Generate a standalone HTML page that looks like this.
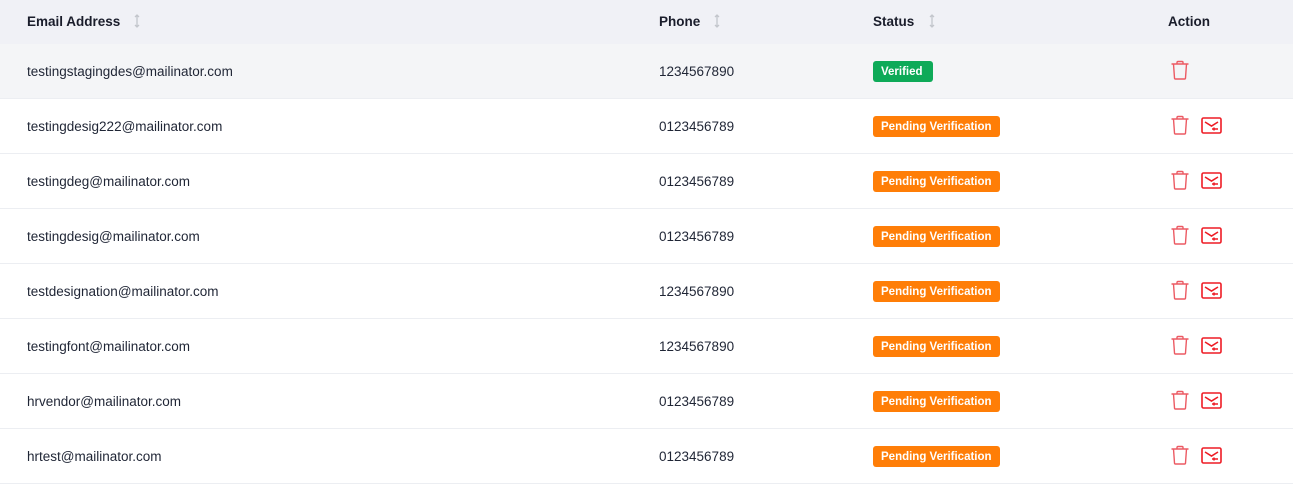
<!DOCTYPE html>
<html><head><meta charset="utf-8"><style>
*{margin:0;padding:0;box-sizing:border-box}
body{width:1293px;height:490px;background:#fff;font-family:"Liberation Sans",sans-serif;color:#1b2033;position:relative;overflow:hidden}
.hdr{position:absolute;left:0;top:0;width:1293px;height:44px;background:#f0f1f6}
.h{position:absolute;top:14px;font-size:13.5px;font-weight:bold;color:#1a1d2b}
.sort{position:absolute;top:13px;width:8px;height:16px}
.row{position:absolute;left:0;width:1293px;height:55px;border-bottom:1px solid #eceef2}
.row.first{background:#f4f5f7}
.c{position:absolute;top:20px;font-size:13.5px;color:#1f2535}
.badge{position:absolute;top:17px;left:873px;height:21px;border-radius:3px;color:#fff;font-weight:bold;font-size:11.5px;line-height:22px;padding:0 8px}
.v{background:#0eaa58;width:60px}
.p{background:#ff7e07;width:127px}
.trash{position:absolute;left:1170px;top:16px}
.mail{position:absolute;left:1201px;top:18px}
</style></head><body>
<div class="hdr">
<div class="h" style="left:27px">Email Address</div>
<svg class="sort" style="left:133px" viewBox="0 0 8 16"><path d="M4 2v12M2 4l2-2 2 2M2 12l2 2 2-2" stroke="#c3c6cc" stroke-width="1.3" fill="none"/></svg>
<div class="h" style="left:659px">Phone</div>
<svg class="sort" style="left:713px" viewBox="0 0 8 16"><path d="M4 2v12M2 4l2-2 2 2M2 12l2 2 2-2" stroke="#c3c6cc" stroke-width="1.3" fill="none"/></svg>
<div class="h" style="left:873px">Status</div>
<svg class="sort" style="left:928px" viewBox="0 0 8 16"><path d="M4 2v12M2 4l2-2 2 2M2 12l2 2 2-2" stroke="#c3c6cc" stroke-width="1.3" fill="none"/></svg>
<div class="h" style="left:1168px">Action</div>
</div>

<div class="row first" style="top:44px"><div class="c" style="left:27px">testingstagingdes@mailinator.com</div><div class="c" style="left:659px">1234567890</div><div class="badge v">Verified</div>
<svg class="trash" width="20" height="20" viewBox="0 0 20 20"><path d="M1.5 4h17M7 4V2.5a1 1 0 0 1 1-1h4a1 1 0 0 1 1 1V4M3.5 4l1 14a1 1 0 0 0 1 1h9a1 1 0 0 0 1-1l1-14" stroke="#ec5a63" stroke-width="1.4" fill="none"/></svg></div>

<div class="row" style="top:99px"><div class="c" style="left:27px">testingdesig222@mailinator.com</div><div class="c" style="left:659px">0123456789</div><div class="badge p">Pending Verification</div>
<svg class="trash" width="20" height="20" viewBox="0 0 20 20"><path d="M1.5 4h17M7 4V2.5a1 1 0 0 1 1-1h4a1 1 0 0 1 1 1V4M3.5 4l1 14a1 1 0 0 0 1 1h9a1 1 0 0 0 1-1l1-14" stroke="#ec5a63" stroke-width="1.4" fill="none"/></svg>
<svg class="mail" width="21" height="17" viewBox="0 0 21 17"><rect x="1" y="1" width="19" height="15" rx="1.5" stroke="#ee1c25" stroke-width="1.6" fill="none"/><path d="M4 5l6.5 4L17 5M11 12h6M13 10.5v3" stroke="#ee1c25" stroke-width="1.6" fill="none"/></svg></div>

<div class="row" style="top:154px"><div class="c" style="left:27px">testingdeg@mailinator.com</div><div class="c" style="left:659px">0123456789</div><div class="badge p">Pending Verification</div>
<svg class="trash" width="20" height="20" viewBox="0 0 20 20"><path d="M1.5 4h17M7 4V2.5a1 1 0 0 1 1-1h4a1 1 0 0 1 1 1V4M3.5 4l1 14a1 1 0 0 0 1 1h9a1 1 0 0 0 1-1l1-14" stroke="#ec5a63" stroke-width="1.4" fill="none"/></svg>
<svg class="mail" width="21" height="17" viewBox="0 0 21 17"><rect x="1" y="1" width="19" height="15" rx="1.5" stroke="#ee1c25" stroke-width="1.6" fill="none"/><path d="M4 5l6.5 4L17 5M11 12h6M13 10.5v3" stroke="#ee1c25" stroke-width="1.6" fill="none"/></svg></div>

<div class="row" style="top:209px"><div class="c" style="left:27px">testingdesig@mailinator.com</div><div class="c" style="left:659px">0123456789</div><div class="badge p">Pending Verification</div>
<svg class="trash" width="20" height="20" viewBox="0 0 20 20"><path d="M1.5 4h17M7 4V2.5a1 1 0 0 1 1-1h4a1 1 0 0 1 1 1V4M3.5 4l1 14a1 1 0 0 0 1 1h9a1 1 0 0 0 1-1l1-14" stroke="#ec5a63" stroke-width="1.4" fill="none"/></svg>
<svg class="mail" width="21" height="17" viewBox="0 0 21 17"><rect x="1" y="1" width="19" height="15" rx="1.5" stroke="#ee1c25" stroke-width="1.6" fill="none"/><path d="M4 5l6.5 4L17 5M11 12h6M13 10.5v3" stroke="#ee1c25" stroke-width="1.6" fill="none"/></svg></div>

<div class="row" style="top:264px"><div class="c" style="left:27px">testdesignation@mailinator.com</div><div class="c" style="left:659px">1234567890</div><div class="badge p">Pending Verification</div>
<svg class="trash" width="20" height="20" viewBox="0 0 20 20"><path d="M1.5 4h17M7 4V2.5a1 1 0 0 1 1-1h4a1 1 0 0 1 1 1V4M3.5 4l1 14a1 1 0 0 0 1 1h9a1 1 0 0 0 1-1l1-14" stroke="#ec5a63" stroke-width="1.4" fill="none"/></svg>
<svg class="mail" width="21" height="17" viewBox="0 0 21 17"><rect x="1" y="1" width="19" height="15" rx="1.5" stroke="#ee1c25" stroke-width="1.6" fill="none"/><path d="M4 5l6.5 4L17 5M11 12h6M13 10.5v3" stroke="#ee1c25" stroke-width="1.6" fill="none"/></svg></div>

<div class="row" style="top:319px"><div class="c" style="left:27px">testingfont@mailinator.com</div><div class="c" style="left:659px">1234567890</div><div class="badge p">Pending Verification</div>
<svg class="trash" width="20" height="20" viewBox="0 0 20 20"><path d="M1.5 4h17M7 4V2.5a1 1 0 0 1 1-1h4a1 1 0 0 1 1 1V4M3.5 4l1 14a1 1 0 0 0 1 1h9a1 1 0 0 0 1-1l1-14" stroke="#ec5a63" stroke-width="1.4" fill="none"/></svg>
<svg class="mail" width="21" height="17" viewBox="0 0 21 17"><rect x="1" y="1" width="19" height="15" rx="1.5" stroke="#ee1c25" stroke-width="1.6" fill="none"/><path d="M4 5l6.5 4L17 5M11 12h6M13 10.5v3" stroke="#ee1c25" stroke-width="1.6" fill="none"/></svg></div>

<div class="row" style="top:374px"><div class="c" style="left:27px">hrvendor@mailinator.com</div><div class="c" style="left:659px">0123456789</div><div class="badge p">Pending Verification</div>
<svg class="trash" width="20" height="20" viewBox="0 0 20 20"><path d="M1.5 4h17M7 4V2.5a1 1 0 0 1 1-1h4a1 1 0 0 1 1 1V4M3.5 4l1 14a1 1 0 0 0 1 1h9a1 1 0 0 0 1-1l1-14" stroke="#ec5a63" stroke-width="1.4" fill="none"/></svg>
<svg class="mail" width="21" height="17" viewBox="0 0 21 17"><rect x="1" y="1" width="19" height="15" rx="1.5" stroke="#ee1c25" stroke-width="1.6" fill="none"/><path d="M4 5l6.5 4L17 5M11 12h6M13 10.5v3" stroke="#ee1c25" stroke-width="1.6" fill="none"/></svg></div>

<div class="row" style="top:429px"><div class="c" style="left:27px">hrtest@mailinator.com</div><div class="c" style="left:659px">0123456789</div><div class="badge p">Pending Verification</div>
<svg class="trash" width="20" height="20" viewBox="0 0 20 20"><path d="M1.5 4h17M7 4V2.5a1 1 0 0 1 1-1h4a1 1 0 0 1 1 1V4M3.5 4l1 14a1 1 0 0 0 1 1h9a1 1 0 0 0 1-1l1-14" stroke="#ec5a63" stroke-width="1.4" fill="none"/></svg>
<svg class="mail" width="21" height="17" viewBox="0 0 21 17"><rect x="1" y="1" width="19" height="15" rx="1.5" stroke="#ee1c25" stroke-width="1.6" fill="none"/><path d="M4 5l6.5 4L17 5M11 12h6M13 10.5v3" stroke="#ee1c25" stroke-width="1.6" fill="none"/></svg></div>
</body></html>
